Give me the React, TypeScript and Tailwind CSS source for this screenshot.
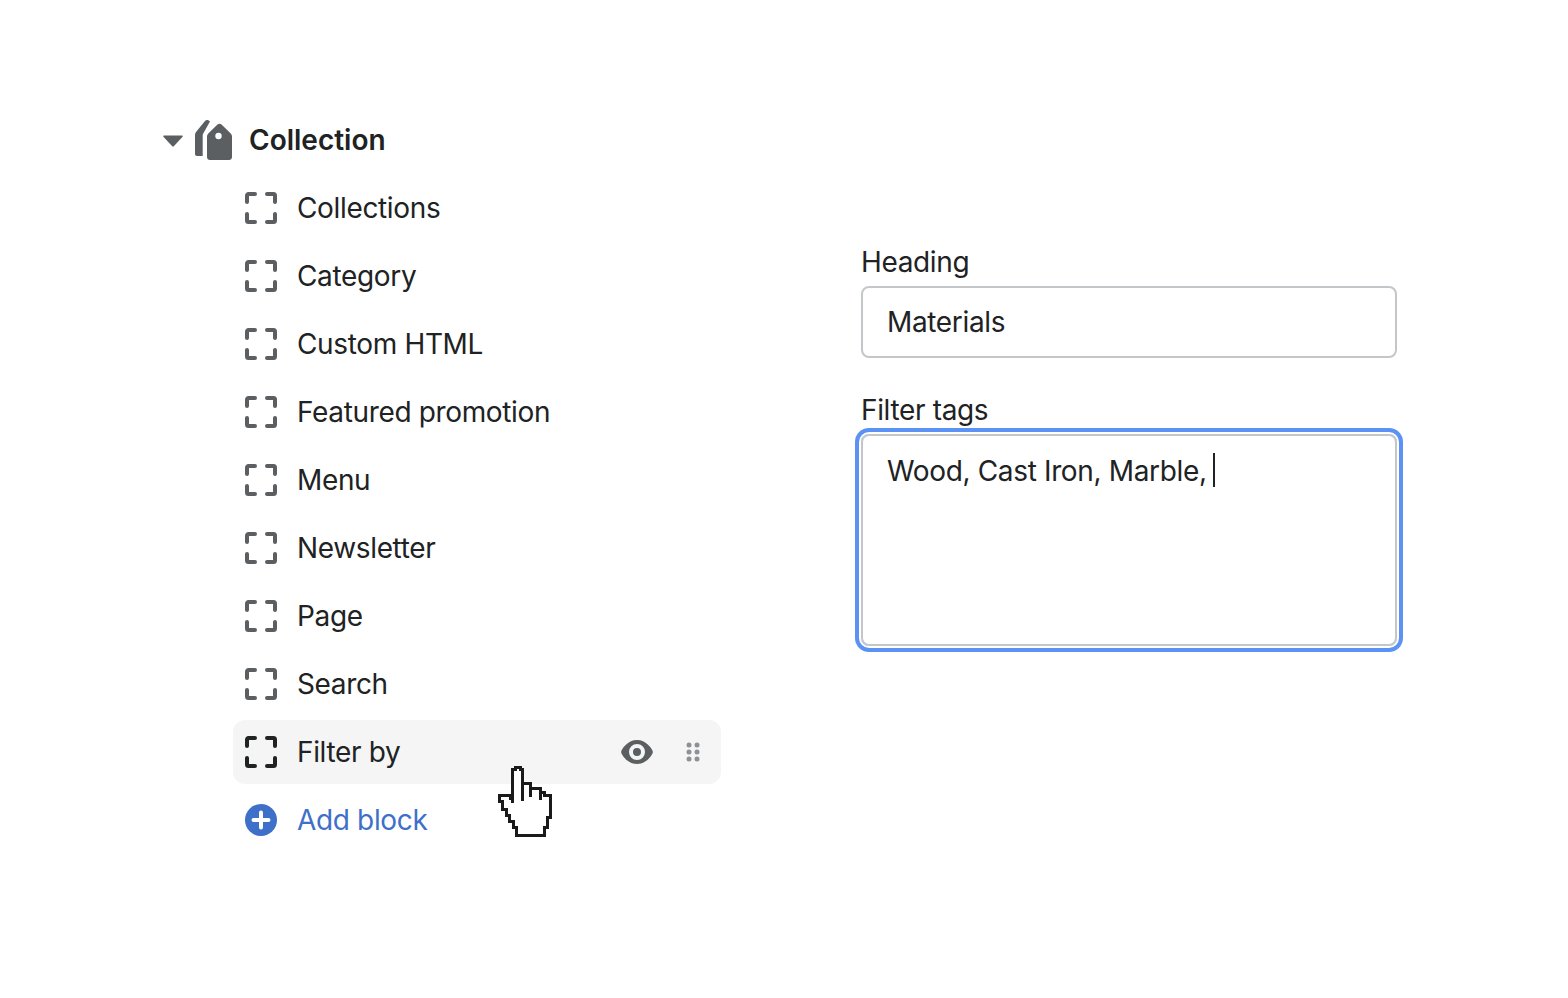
const ITEMS = [
  "Collections",
  "Category",
  "Custom HTML",
  "Featured promotion",
  "Menu",
  "Newsletter",
  "Page",
  "Search",
];

function FrameIcon({ color = "#5c5f62" }: { color?: string }) {
  return (
    <svg width="32" height="32" viewBox="0 0 32 32" fill="none" stroke={color} strokeWidth="4" strokeLinecap="round" strokeLinejoin="round">
      <path d="M2 10V3.500C2 2.700 2.700 2 3.500 2H10" />
      <path d="M22 2h6.500c.8 0 1.500.7 1.500 1.500V10" />
      <path d="M2 22v6.500c0 .8.7 1.500 1.500 1.500H10" />
      <path d="M22 30h6.500c.8 0 1.500-.7 1.500-1.500V22" />
    </svg>
  );
}

function TagIcon() {
  return (
    <svg width="38" height="40" viewBox="0 0 38 40" fill="#5c5f62">
      <path d="M10 1c1.500-1.500 3.500-1 5 .5L8.500 13c-.5.8-.8 1.500-.8 2.500V36H2c-1.100 0-2-.9-2-2V15c0-1 .3-2 1-3L10 1Z" />
      <path
        fillRule="evenodd"
        d="M22.500 4.500c1-.9 3-.9 4 0l9 8.800c1 1 1.500 2.200 1.500 3.500V37c0 1.700-1.300 3-3 3H15c-1.700 0-3-1.300-3-3V16.800c0-1.300.5-2.500 1.500-3.500l9-8.800ZM23.500 12.800a3.200 3.200 0 1 0 0 6.400 3.200 3.200 0 0 0 0-6.400Z"
      />
    </svg>
  );
}

function EyeIcon() {
  return (
    <svg width="32" height="24" viewBox="0 0 32 24">
      <path
        fill="#5c5f62"
        fillRule="evenodd"
        d="M16 0C7 0 1.500 8 .3 11c-.2.600-.2 1.400 0 2C1.500 16 7 24 16 24s14.500-8 15.700-11c.2-.6.2-1.400 0-2C30.500 8 25 0 16 0Zm0 4a8 8 0 1 0 0 16 8 8 0 0 0 0-16Zm0 4a4 4 0 1 1 0 8 4 4 0 0 1 0-8Z"
      />
    </svg>
  );
}

function DragIcon() {
  return (
    <svg width="14" height="20" viewBox="0 0 14 20" fill="#8c9196">
      <circle cx="3" cy="3" r="2.500" />
      <circle cx="11" cy="3" r="2.500" />
      <circle cx="3" cy="10" r="2.500" />
      <circle cx="11" cy="10" r="2.500" />
      <circle cx="3" cy="17" r="2.500" />
      <circle cx="11" cy="17" r="2.500" />
    </svg>
  );
}

function PlusIcon() {
  return (
    <svg width="32" height="32" viewBox="0 0 32 32">
      <circle cx="16" cy="16" r="16" fill="#3e6fc9" />
      <path d="M16 8.500v15M8.500 16h15" stroke="#fff" strokeWidth="4" strokeLinecap="round" />
    </svg>
  );
}

function HandCursor() {
  return (
    <svg width="60" height="74" viewBox="0 0 60 74" shapeRendering="crispEdges" className="absolute left-[263px] top-[-23px]">
      <path
        fill="#fff"
        stroke="#1a1a1a"
        strokeWidth="3"
        d="M16.500 38V4H19V2.500h5V4h2.500v14H34v5h10v4h4v3h6v22h-3v10h-3v8H20v-8h-3v-6h-4v-6h-3v-6H6v-8H3v-6h11v3h2.500"
      />
      <path fill="none" stroke="#1a1a1a" strokeWidth="3" d="M26.500 18v18M34.500 23v9M44.500 27v8" />
    </svg>
  );
}

function Label({ children }: { children: React.ReactNode }) {
  return <div className="h-[44px] text-[28px] leading-[44px] text-[#202223]">{children}</div>;
}

export default function App() {
  return (
    <div className="flex h-[998px] w-[1568px] bg-white pt-[104px] font-['Inter','Liberation_Sans',sans-serif] text-[28px] tracking-[-0.35px] text-[#202223] antialiased">
      <div className="ml-[163px] w-[558px]">
        <div className="flex h-[72px] items-center">
          <svg width="20" height="12" viewBox="0 0 20 12" fill="#5c5f62" className="mt-[2px]">
            <path d="M1 .5h18c.6 0 1 .7.6 1.200l-8.800 9.600c-.4.400-1.200.4-1.600 0L.4 1.700C0 1.200.4.500 1 .5Z" />
          </svg>
          <div className="ml-[12px] mb-[1px]">
            <TagIcon />
          </div>
          <span className="ml-[16px] font-semibold tracking-normal">Collection</span>
        </div>
        <div className="ml-[70px] flex flex-col gap-[4px]">
          {ITEMS.map((item) => (
            <div key={item} className="flex h-[64px] items-center px-[12px]">
              <FrameIcon />
              <span className="ml-[20px]">{item}</span>
            </div>
          ))}
          <div className="flex h-[64px] items-center rounded-[12px] bg-[#f5f5f5] px-[12px]">
            <FrameIcon color="#202223" />
            <span className="ml-[20px]">Filter by</span>
            <div className="ml-auto mr-[9px] flex items-center gap-[33px]">
              <EyeIcon />
              <DragIcon />
            </div>
          </div>
          <div className="relative flex h-[64px] items-center px-[12px] text-[#3e6fc9]">
            <PlusIcon />
            <span className="ml-[20px]">Add block</span>
            <HandCursor />
          </div>
        </div>
      </div>
      <div className="ml-[140px] mt-[136px] w-[536px]">
        <Label>Heading</Label>
        <div className="mt-[2px] flex h-[72px] items-center rounded-[8px] border-2 border-[#c4c7ca] px-[24px]">
          Materials
        </div>
        <div className="mt-[30px]">
          <Label>Filter tags</Label>
        </div>
        <div className="mt-[2px] h-[212px] rounded-[8px] border-2 border-[#c4c7ca] px-[24px] pt-[11px] leading-[40px] shadow-[0_0_0_2px_#fff,0_0_0_6px_#5b92f4]">
          <span>Wood, Cast Iron, Marble,</span>
          <span className="ml-[6px] inline-block h-[34px] w-[2px] translate-y-[6px] bg-[#202223]" />
        </div>
      </div>
    </div>
  );
}
